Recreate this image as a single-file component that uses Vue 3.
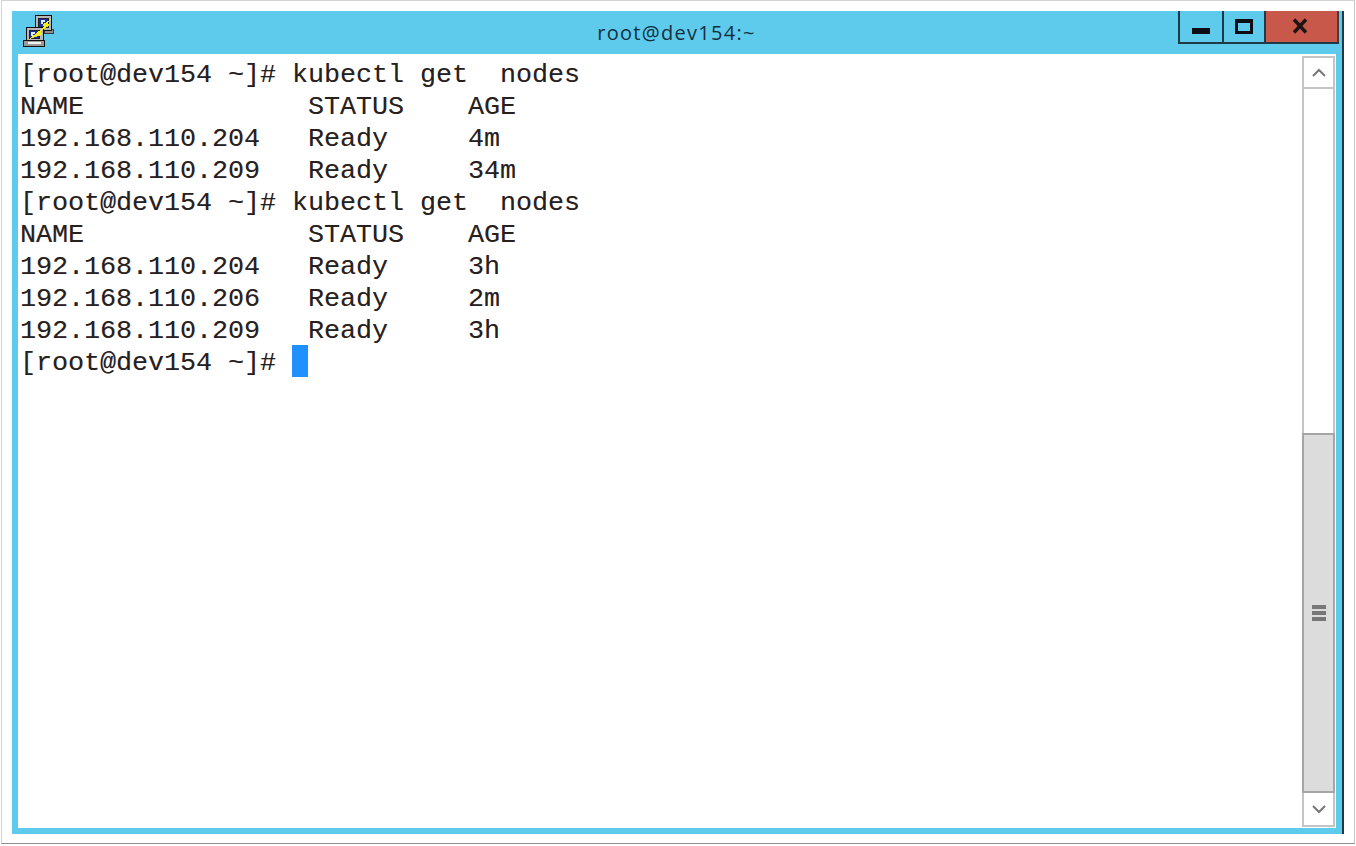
<script setup>
const lines = [
  '[root@dev154 ~]# kubectl get  nodes',
  'NAME              STATUS    AGE',
  '192.168.110.204   Ready     4m',
  '192.168.110.209   Ready     34m',
  '[root@dev154 ~]# kubectl get  nodes',
  'NAME              STATUS    AGE',
  '192.168.110.204   Ready     3h',
  '192.168.110.206   Ready     2m',
  '192.168.110.209   Ready     3h',
]
</script>

<template>
  <div class="page">
    <div class="frame">
      <div class="window">
        <header class="titlebar">
          <svg class="app-icon" width="34" height="34" viewBox="0 0 34 34" shape-rendering="crispEdges">
            <!-- upper computer -->
            <path d="M21 15h11v5H21z" fill="#3a3a3a" />
            <path d="M23 16h8v3h-8z" fill="#8f8f8f" />
            <path d="M13 1h17v16H13z" fill="#111" />
            <path d="M14 2h15v14H14z" fill="#b8b8b8" />
            <path d="M16 4h11v10H16z" fill="#20202a" />
            <path d="M17 5h9v8h-9z" fill="#1b2ea0" />
            <path d="M19 6h4v2h-2v2h-2z" fill="#dfe8ff" />
            <!-- lower computer -->
            <path d="M4 13h18v14H4z" fill="#111" />
            <path d="M5 14h16v12H5z" fill="#b8b8b8" />
            <path d="M7 16h11v9H7z" fill="#20202a" />
            <path d="M8 17h9v7H8z" fill="#1b2ea0" />
            <path d="M9 18h4v2h-2v2H9z" fill="#dfe8ff" />
            <path d="M1 26h22v7H1z" fill="#111" />
            <path d="M2 27h20v5H2z" fill="#9a9a9a" />
            <path d="M6 28h13v2H6z" fill="#f2f2f2" />
            <!-- lightning -->
            <polygon points="29,5 20,11 22,13 7,25 20,21 19,17 28,11 25,9" fill="#f7ec1c" />
          </svg>
          <div class="title">root@dev154:~</div>
          <div class="controls">
            <div class="btn min"><span class="min-glyph"></span></div>
            <div class="btn max"><span class="max-glyph"></span></div>
            <div class="btn close">
              <svg width="16" height="16" viewBox="0 0 16 16">
                <path d="M2 1.5L14 14.5M14 1.5L2 14.5" stroke="#1c1512" stroke-width="3.4" fill="none" />
              </svg>
            </div>
          </div>
        </header>
        <div class="body">
          <div class="terminal">
            <div v-for="(line, i) in lines" :key="i" class="line">{{ line }}</div>
            <div class="line">[root@dev154 ~]# <span class="cursor"></span></div>
          </div>
          <aside class="scrollbar">
            <div class="arrow up">
              <svg width="14" height="9" viewBox="0 0 14 9">
                <path d="M1 8L7 2L13 8" stroke="#777" stroke-width="2" fill="none" />
              </svg>
            </div>
            <div class="track"></div>
            <div class="thumb">
              <span class="grip"></span>
              <span class="grip"></span>
              <span class="grip"></span>
            </div>
            <div class="arrow down">
              <svg width="14" height="9" viewBox="0 0 14 9">
                <path d="M1 1L7 7L13 1" stroke="#777" stroke-width="2" fill="none" />
              </svg>
            </div>
          </aside>
        </div>
      </div>
    </div>
  </div>
</template>

<style>
html, body { margin: 0; background: #fff; }
</style>

<style scoped>
.page {
  width: 1356px;
  height: 846px;
  box-sizing: border-box;
  padding: 0 1px 2px 1px;
  background: #fff;
  overflow: hidden;
}
.frame {
  height: 100%;
  box-sizing: border-box;
  padding: 10px 10px 9px 10px;
  background: #fff;
  border: 1px solid #d4d4d4;
  border-bottom: 1px solid #8e8e8e;
  border-right-color: #c4c4c4;
}
.window {
  height: 100%;
  box-sizing: border-box;
  display: flex;
  flex-direction: column;
  background: #5ecbec;
  border-right: 2px solid #1f3a47;
  padding: 0 6px 6px 6px;
}
.titlebar {
  height: 43px;
  flex: none;
  display: grid;
  grid-template-columns: 1fr auto 1fr;
  align-items: start;
  margin-right: -3px;
  box-shadow: 0 1px 0 #7ab9cf;
}
.app-icon {
  margin: 3px 0 0 4px;
}
.title {
  padding-top: 8px;
  padding-right: 4px;
  font: 20px/28px "Open Sans", "Liberation Sans", sans-serif;
  letter-spacing: 1.3px;
  color: #13303f;
}
.controls {
  justify-self: end;
  display: flex;
  height: 33px;
  box-sizing: border-box;
  border: solid #1f3a47;
  border-width: 0 0 2px 2px;
}
.btn {
  display: flex;
  align-items: center;
  justify-content: center;
}
.min {
  width: 42px;
  border-right: 2px solid #1f3a47;
}
.max {
  width: 40px;
  border-right: 2px solid #1f3a47;
}
.close {
  width: 73px;
  background: #c8584a;
  border-right: 2px solid #4a3a38;
  align-items: flex-start;
  padding: 7px 4px 0 0;
  box-sizing: border-box;
}
.min-glyph {
  display: block;
  width: 18px;
  height: 6px;
  margin-top: 8px;
  background: #0c0c14;
}
.max-glyph {
  display: block;
  width: 18px;
  height: 15px;
  box-sizing: border-box;
  border: 3px solid #0c0c14;
  border-top-width: 4px;
}
.body {
  flex: 1;
  min-height: 0;
  display: flex;
  background: #fff;
}
.terminal {
  flex: 1;
  min-width: 0;
  padding: 3px 0 0 2px;
  font-family: "Liberation Mono", "Courier New", monospace;
  font-size: 26.67px;
  color: #26211f;
  text-shadow: 0.4px 0 0.6px rgba(110, 80, 60, 0.45);
}
.line {
  height: 32px;
  line-height: 36px;
  white-space: pre;
}
.cursor {
  display: inline-block;
  width: 16px;
  height: 32px;
  vertical-align: top;
  background: #1e90ff;
}
.scrollbar {
  width: 33px;
  margin-right: 1px;
  flex: none;
  display: flex;
  flex-direction: column;
  padding: 2px 0 1px;
  box-sizing: border-box;
}
.arrow {
  flex: none;
  box-sizing: border-box;
  display: flex;
  align-items: center;
  justify-content: center;
  background: #fff;
  border: 2px solid #c4c4c4;
}
.up {
  height: 33px;
}
.down {
  height: 34px;
  border-top: none;
}
.track {
  height: 344px;
  flex: none;
  border: solid #c4c4c4;
  border-width: 0 2px;
}
.thumb {
  flex: 1;
  box-sizing: border-box;
  display: flex;
  flex-direction: column;
  align-items: center;
  justify-content: center;
  gap: 2px;
  background: #dcdcdc;
  border: 2px solid #a6a6a6;
}
.grip {
  width: 14px;
  height: 4px;
  background: #777;
}
</style>
